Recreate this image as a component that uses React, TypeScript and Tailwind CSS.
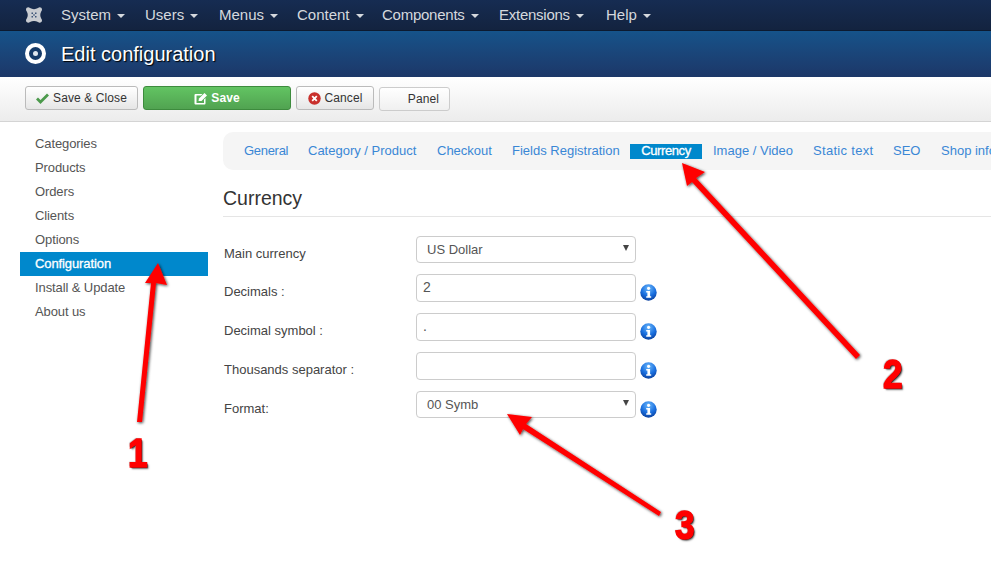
const font = "font-['Liberation_Sans',Arial,sans-serif]";

const navItems = [
  { label: "System", cls: "w-[84px]" },
  { label: "Users", cls: "w-[74px]" },
  { label: "Menus", cls: "w-[78px]" },
  { label: "Content", cls: "w-[85px]" },
  { label: "Components", cls: "w-[117px] tracking-[-0.25px]" },
  { label: "Extensions", cls: "w-[107px] tracking-[-0.25px]" },
  { label: "Help", cls: "w-[60px]" },
];
const sideItems = ["Categories", "Products", "Orders", "Clients", "Options", "Configuration", "Install & Update", "About us"];
const tabs = [
  { label: "General", cls: "w-[85px] pl-[21px] tracking-[-0.3px]" },
  { label: "Category / Product", cls: "w-[129px]" },
  { label: "Checkout", cls: "w-[75px]" },
  { label: "Fields Registration", cls: "w-[118px]" },
  { label: "Currency", cls: "w-[83px]" },
  { label: "Image / Video", cls: "w-[100px]" },
  { label: "Static text", cls: "w-[80px] tracking-[0.3px]" },
  { label: "SEO", cls: "w-[48px]" },
  { label: "Shop info", cls: "w-[60px]" },
];

const InfoIcon = () => (
  <svg width="17" height="17" viewBox="0 0 17 17" className="shrink-0">
    <defs>
      <radialGradient id="infoBg" cx="50%" cy="25%" r="80%">
        <stop offset="0%" stopColor="#6db8fa" />
        <stop offset="55%" stopColor="#1a70e0" />
        <stop offset="100%" stopColor="#0a3a94" />
      </radialGradient>
    </defs>
    <circle cx="8.5" cy="8.5" r="8.2" fill="url(#infoBg)" />
    <circle cx="8.6" cy="4.3" r="1.6" fill="#fff" />
    <path d="M6.2 6.9h3.9v5.4h1.1v1.5H6.2v-1.5h1.2V8.4H6.2z" fill="#fff" />
  </svg>
);

const Row = ({ label, children, icon }: { label: string; children: React.ReactNode; icon?: boolean }) => (
  <div className="flex">
    <div className="w-[193px] pt-[10px] pl-px text-[13px] leading-[16px] text-[#444]">{label}</div>
    {children}
    {icon && <div className="ml-1 mt-[10px]"><InfoIcon /></div>}
  </div>
);

const SelectBox = ({ value }: { value: string }) => (
  <div className="flex h-[27px] w-[220px] items-center justify-between rounded-[4px] border border-[#ccc] bg-white pl-[10px] pr-[6px] text-[13px] text-[#555]">
    <span>{value}</span>
    <span className="-mt-[4px] h-0 w-0 border-x-[3.5px] border-t-[6px] border-x-transparent border-t-[#444]" />
  </div>
);

const TextBox = ({ value }: { value: string }) => (
  <div className="h-[28px] w-[220px] rounded-[4px] border border-[#ccc] bg-white pl-[6px] pt-[2px] text-[14px] leading-[20px] text-[#555]">{value}</div>
);

const Annotation = ({ n, className }: { n: string; className: string }) => (
  <div className={`absolute origin-left scale-x-[0.88] text-[40px] leading-[40px] font-bold text-[#f00] [-webkit-text-stroke:1.5px_#f00] [text-shadow:1px_1px_1px_#222,-1px_-1px_1px_#bbb,2px_2px_2px_#777] ${className}`}>{n}</div>
);

export default function App() {
  return (
    <div className={`${font} relative h-[575px] w-[991px] overflow-hidden bg-white`}>
      <div className="flex h-[31px] items-center border-b border-[#0c1a30] bg-gradient-to-b from-[#162c52] to-[#13233f] pl-[25px]">
        <svg width="18" height="18" viewBox="0 0 18 18" className="mr-[18px]">
          <path d="M1 3.5C1 1.5 3.5.5 5 2c2.5 1.5 5.5 1.500 8 0 1.5-1.5 4-.5 4 1.5 0 1-.5 1.5-1 2.5-1 2-1 4 0 6 .5 1 1 1.5 1 2.5 0 2-2.5 3-4 1.5-2.5-1.500-5.500-1.500-8 0-1.5 1.5-4 .5-4-1.5 0-1 .5-1.5 1-2.5 1-2 1-4 0-6C1.5 5 1 4.5 1 3.500z" fill="#c9ccd1" />
          <path d="M6.5 6.500h1.500v1.500H6.500zM10 6.500h1.500v1.500H10zM6.500 10h1.500v1.500H6.500zM10 10h1.500v1.500H10zM8.300 8.300h1.400v1.400H8.300z" fill="#3d5478" />
        </svg>
        {navItems.map((item) => (
          <div key={item.label} className={`flex items-center text-[15px] text-[#d5d9de] ${item.cls}`}>
            {item.label}
            <span className="ml-[6px] mt-[2px] h-0 w-0 border-x-[4px] border-t-[4px] border-x-transparent border-t-[#d5d9de]" />
          </div>
        ))}
      </div>

      <div className="flex h-[46px] items-center bg-gradient-to-b from-[#15538a] to-[#1c3768] pl-[25px]">
        <div className="mb-[2px] mr-[15px] flex h-[21px] w-[21px] items-center justify-center rounded-full border-[4px] border-white bg-[#153a68]">
          <div className="h-[5px] w-[5px] rounded-full bg-[#dfe6ee]" />
        </div>
        <h1 className="text-[20px] text-white [text-shadow:1px_1px_1px_#000]">Edit configuration</h1>
      </div>

      <div className="flex h-[45px] items-start border-b border-[#d4d4d4] bg-gradient-to-b from-white to-[#ececec] pl-[25px] pt-[9px] text-[12px] tracking-[0.1px]">
        <button className="flex h-[24px] w-[113px] items-center justify-center rounded-[3px] border border-[#bbb] bg-gradient-to-b from-white to-[#e6e6e6] text-[#333]">
          <svg width="13" height="11" viewBox="0 0 13 11" className="mr-[4px]"><path d="M1 5.5l3.5 3.5L12 1.500" fill="none" stroke="#4c9a4c" strokeWidth="2.8" /></svg>
          Save &amp; Close
        </button>
        <button className="ml-[5px] flex h-[24px] w-[148px] items-center justify-center rounded-[3px] border border-[#3d8b3d] bg-gradient-to-b from-[#62c462] to-[#51a351] font-bold text-white">
          <svg width="13" height="13" viewBox="0 0 13 13" className="mr-[4px]">
            <path d="M1.5 2h7L7 3.5H2.5V11H10V7.500L11.5 6v5.500a1 1 0 0 1-1 1h-9a1 1 0 0 1-1-1V3a1 1 0 0 1 1-1z" fill="#fff" />
            <path d="M4.5 9l.5-2.500L10.500 1 13 3.500 7.500 9z" fill="#fff" />
          </svg>
          Save
        </button>
        <button className="ml-[5px] flex h-[24px] w-[78px] items-center justify-center rounded-[3px] border border-[#bbb] bg-gradient-to-b from-white to-[#e6e6e6] text-[#333]">
          <svg width="13" height="13" viewBox="0 0 13 13" className="mr-[4px]">
            <circle cx="6.5" cy="6.5" r="6.2" fill="#c9302c" />
            <path d="M4.2 4.2l4.6 4.6M8.8 4.2L4.2 8.8" stroke="#fff" strokeWidth="1.8" />
          </svg>
          Cancel
        </button>
        <button className="ml-[5px] mt-px flex h-[24px] w-[71px] items-center justify-end rounded-[3px] border border-[#ccc] bg-gradient-to-b from-white to-[#f0f0f0] pr-[10px] text-[#333]">Panel</button>
      </div>

      <div className="flex pl-[20px] pt-[10px]">
        <div className="w-[188px] shrink-0">
          {sideItems.map((item) => (
            <div
              key={item}
              className={`h-[24px] pl-[15px] text-[13px] leading-[24px] tracking-[-0.1px] ${item === "Configuration" ? "bg-[#0088cc] text-white [-webkit-text-stroke:0.3px_#fff]" : "text-[#555]"}`}
            >
              {item}
            </div>
          ))}
        </div>

        <div className="ml-[15px] flex-1">
          <div className="flex h-[38px] w-[800px] items-center whitespace-nowrap rounded-l-[10px] bg-[#f5f5f5] text-[13px]">
            {tabs.map((tab) => (
              <div key={tab.label} className={`flex h-[15px] shrink-0 items-center text-[#3a87d5] ${tab.cls}`}>
                {tab.label === "Currency" ? (
                  <span className="flex h-[15px] w-[72px] items-center justify-center bg-[#0088cc] tracking-[-0.4px] text-white [-webkit-text-stroke:0.3px_#fff]">{tab.label}</span>
                ) : (
                  tab.label
                )}
              </div>
            ))}
          </div>

          <h2 className="mt-[16px] h-[31px] border-b border-[#e5e5e5] text-[19.5px] leading-[24px] text-[#333]">Currency</h2>

          <div className="mt-[19px] flex flex-col gap-[11px]">
            <Row label="Main currency"><SelectBox value="US Dollar" /></Row>
            <Row label="Decimals :" icon><TextBox value="2" /></Row>
            <Row label="Decimal symbol :" icon><TextBox value="." /></Row>
            <Row label="Thousands separator :" icon><TextBox value="" /></Row>
            <Row label="Format:" icon><SelectBox value="00 Symb" /></Row>
          </div>
        </div>
      </div>

      {/* red hand drawn annotations */}
      <svg width="991" height="575" viewBox="0 0 991 575" className="pointer-events-none absolute left-0 top-0">
        <defs>
          <filter id="arrowShadow" x="-20%" y="-20%" width="140%" height="140%">
            <feDropShadow dx="1" dy="1" stdDeviation="1.4" floodColor="#000" floodOpacity="0.75" />
          </filter>
        </defs>
        <g fill="#f00" filter="url(#arrowShadow)">
          <path d="M158 263L167 285L156 283L142 422L137 422L151 283L145 283Z" />
          <path d="M682 163L705 172L696 178L860 355L856 359L692 182L687 186Z" />
          <path d="M507 414L532 417L526 424L661 512L659 516L523 429L520 435Z" />
        </g>
      </svg>
      <Annotation n="1" className="left-[128px] top-[433px]" />
      <Annotation n="2" className="left-[883px] top-[354px]" />
      <Annotation n="3" className="left-[675px] top-[505px]" />
    </div>
  );
}
